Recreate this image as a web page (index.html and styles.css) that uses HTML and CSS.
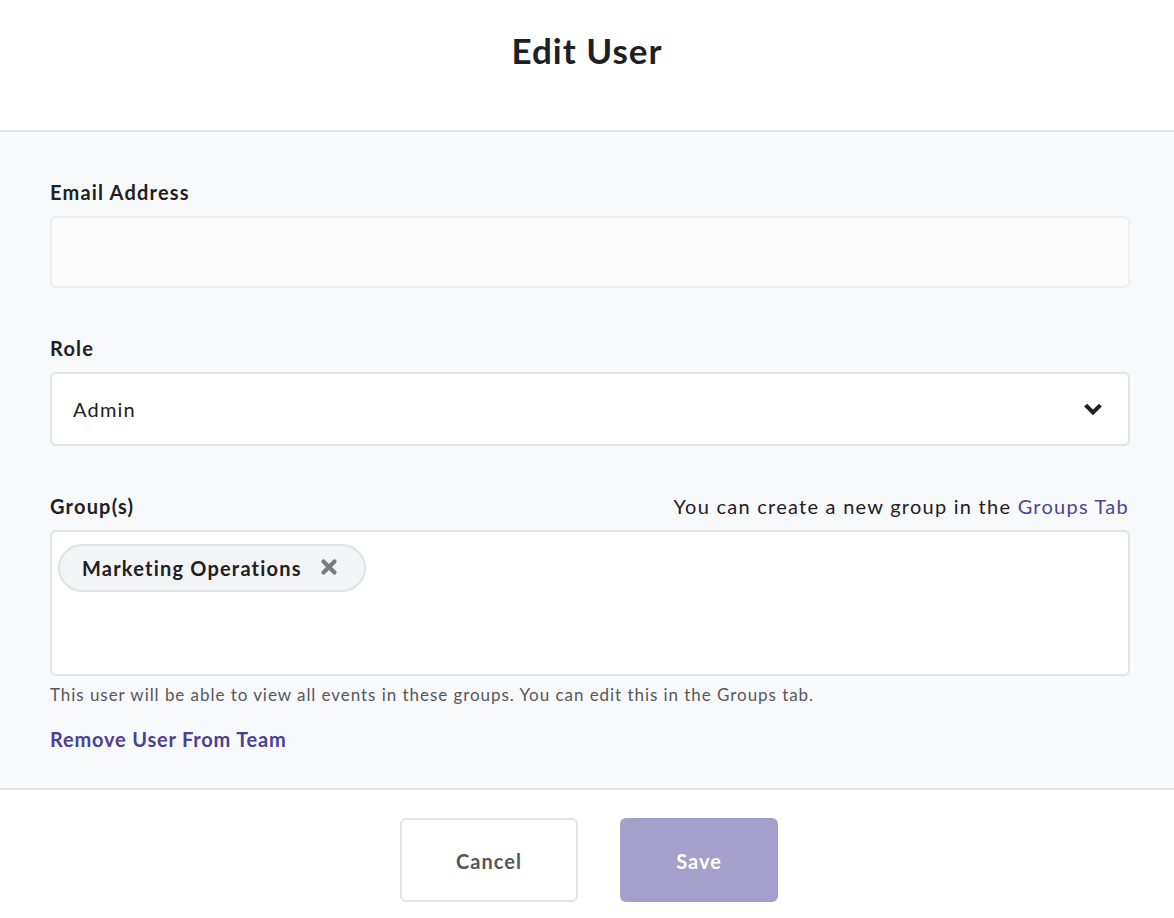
FILE: index.html
```html
<!DOCTYPE html>
<html lang="en">
<head>
  <meta charset="UTF-8" />
  <title>Edit User</title>
  <link rel="stylesheet" href="styles.css">
</head>
<body>
  <!-- Header -->
  <div class="modal-header">
    <h1>Edit User</h1>
  </div>

  <!-- Form -->
  <div class="modal-body">
    <div class="field">
      <label class="field-label">Email Address</label>
      <div class="input input-email"></div>
    </div>

    <div class="field">
      <label class="field-label">Role</label>
      <div class="input input-select">
        <span>Admin</span>
        <svg class="chevron" width="18" height="14" viewBox="0 0 18 14">
          <path d="M3 3.5 L9 9.5 L15 3.5" fill="none" stroke="#1f2023" stroke-width="4" stroke-linecap="square" stroke-linejoin="miter"/>
        </svg>
      </div>
    </div>

    <div class="field">
      <div class="field-row">
        <label class="field-label">Group(s)</label>
        <span class="hint">You can create a new group in the <a href="#">Groups Tab</a></span>
      </div>
      <div class="input input-groups">
        <span class="chip">
          Marketing Operations
          <svg class="chip-x" width="18" height="18" viewBox="0 0 18 18">
            <path d="M3.5 3.5 L14.5 14.5 M14.5 3.5 L3.5 14.5" stroke="#7a7b7e" stroke-width="4.2" stroke-linecap="round"/>
          </svg>
        </span>
      </div>
      <p class="help">This user will be able to view all events in these groups. You can edit this in the Groups tab.</p>
    </div>

    <a class="remove-link" href="#">Remove User From Team</a>
  </div>

  <!-- Footer -->
  <div class="modal-footer">
    <button class="btn btn-cancel">Cancel</button>
    <button class="btn btn-save">Save</button>
  </div>
</body>
</html>
```
FILE: styles.css
```css
body {
  font-family: Lato, 'Open Sans', sans-serif;
  background: #ffffff;
  color: #1f2023;
  margin: 0;
}

/* Header */
.modal-header {
  height: 130px;
  border-bottom: 2px solid #e3e4e8;
  display: flex;
  justify-content: center;
}
.modal-header h1 {
  margin: 28px 0 0;
  font-size: 35px;
  line-height: 44px;
  font-weight: 700;
  letter-spacing: 1px;
  color: #1f2023;
}

/* Body */
.modal-body {
  background: #f8f9fb;
  padding: 48px 44px 37px 50px;
  display: flex;
  flex-direction: column;
  border-bottom: 2px solid #e3e4e8;
}
.field {
  display: flex;
  flex-direction: column;
  margin-bottom: 48px;
}
.field:nth-child(3) {
  margin-bottom: 22px;
}
.field-label {
  font-size: 20px;
  line-height: 24px;
  font-weight: 700;
  letter-spacing: 1.2px;
  margin-bottom: 12px;
}
.field-row {
  display: flex;
  justify-content: space-between;
  align-items: baseline;
}
.hint {
  font-size: 20px;
  line-height: 24px;
  color: #1f2023;
  letter-spacing: 1.25px;
  margin-right: 1px;
}
.hint a {
  color: #4d4399;
  text-decoration: none;
}

.input {
  box-sizing: border-box;
  border: 2px solid #e3e4e8;
  border-radius: 6px;
  background: #ffffff;
}
.input-email {
  height: 72px;
  background: #fcfcfd;
  border-color: #eeeff2;
}
.input-select {
  height: 74px;
  display: flex;
  align-items: center;
  justify-content: space-between;
  padding: 0 26px 0 21px;
  font-size: 20px;
  letter-spacing: 1.2px;
}
.chevron {
  margin-top: 1px;
}
.input-groups {
  height: 146px;
  padding: 12px 6px;
  display: flex;
  align-items: flex-start;
}
.chip {
  display: inline-flex;
  align-items: center;
  height: 48px;
  box-sizing: border-box;
  padding: 0 26px 0 22px;
  border: 2px solid #e0e1e5;
  border-radius: 24px;
  background: #f3f4f6;
  font-size: 20px;
  font-weight: 700;
  letter-spacing: 1.2px;
}
.chip-x {
  margin-left: 18px;
  margin-top: -2px;
}
.help {
  margin: 9px 0 0;
  font-size: 17px;
  line-height: 20px;
  color: #56575b;
  letter-spacing: 0.95px;
}
.remove-link {
  font-size: 20px;
  line-height: 24px;
  font-weight: 700;
  color: #4b3f96;
  letter-spacing: 0.8px;
  text-decoration: none;
}

/* Footer */
.modal-footer {
  display: flex;
  justify-content: center;
  gap: 42px;
  padding: 28px 0 0 4px;
}
.btn {
  font-family: Lato, 'Open Sans', sans-serif;
  font-size: 20px;
  font-weight: 700;
  letter-spacing: 1px;
  height: 84px;
  padding-top: 3px;
  border-radius: 6px;
  cursor: pointer;
}
.btn-cancel {
  width: 178px;
  background: #ffffff;
  border: 2px solid #e3e4e8;
  color: #55565a;
}
.btn-save {
  width: 158px;
  background: #a59fcb;
  border: none;
  color: #ffffff;
}
```
